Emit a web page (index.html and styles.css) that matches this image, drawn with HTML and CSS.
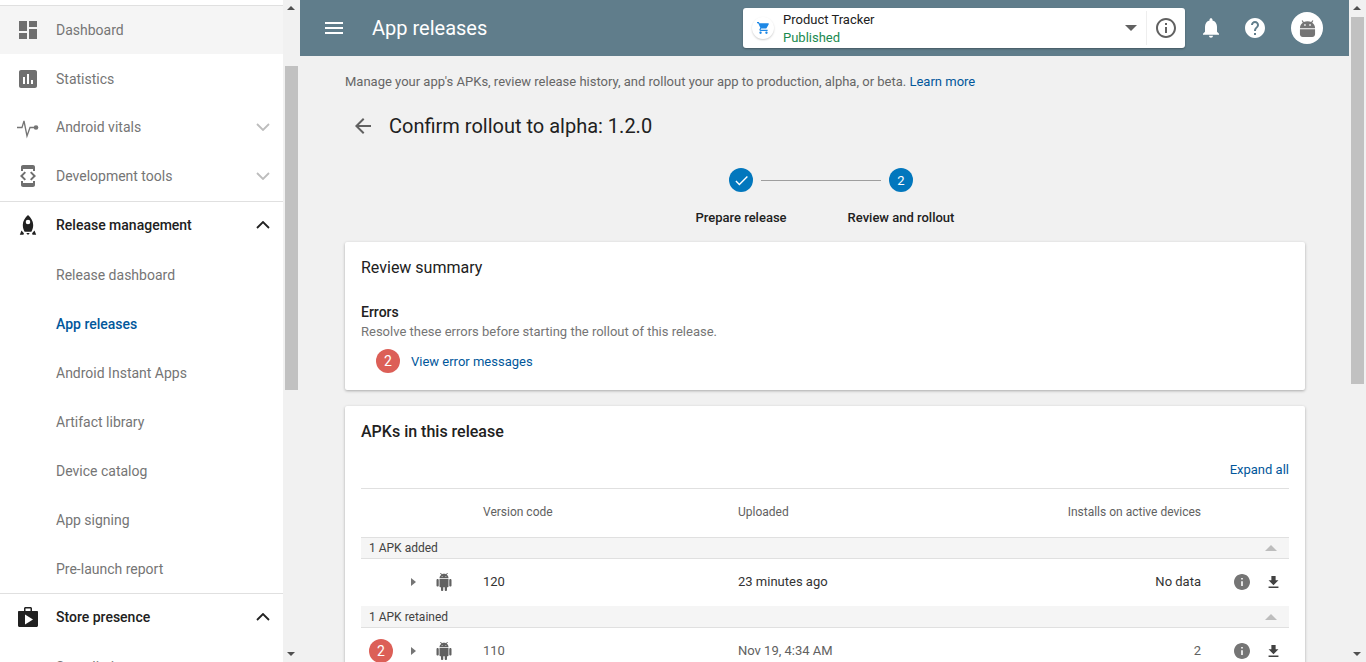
FILE: index.html
```html
<!DOCTYPE html>
<html lang="en">
<head>
<meta charset="utf-8">
<title>App releases</title>
<link rel="stylesheet" href="styles.css">
</head>
<body>
<svg class="sprite" xmlns="http://www.w3.org/2000/svg">
  <symbol id="dashboard" viewBox="3 3 18 18"><path d="M3 13h8V3H3v10zm0 8h8v-6H3v6zm10 0h8V11h-8v10zm0-18v6h8V3h-8z"/></symbol>
  <symbol id="stats" viewBox="3 3 18 18"><path d="M19 3H5c-1.1 0-2 .9-2 2v14c0 1.1.9 2 2 2h14c1.1 0 2-.9 2-2V5c0-1.1-.9-2-2-2zM9 17H7v-7h2v7zm4 0h-2V7h2v10zm4 0h-2v-4h2v4z"/></symbol>
  <symbol id="devtools" viewBox="0 0 24 24"><path d="M7 5h10v2h2V3c0-1.1-.9-1.99-2-1.99L7 1c-1.1 0-2 .9-2 2v4h2V5zm8.41 11.59L20 12l-4.59-4.59L14 8.83 17.17 12 14 15.17l1.41 1.42zM10 15.17L6.83 12 10 8.83 8.59 7.41 4 12l4.59 4.59L10 15.17zM17 19H7v-2H5v4c0 1.1.9 2 2 2h10c1.1 0 2-.9 2-2v-4h-2v2z"/></symbol>
  <symbol id="vitals" viewBox="0 0 24 24"><path class="pulse" d="M1 12.500h5L8 6l3 15 3-8.500h5"/><circle cx="20" cy="12.500" r="2.300"/></symbol>
  <symbol id="rocket" viewBox="0 0 24 24"><path d="M12 2C9.200 4.600 6.800 8 6.800 12c0 2.600.8 5 1.800 6.800h6.800c1-1.800 1.800-4.200 1.800-6.800C17.200 8 14.800 4.600 12 2zm0 9.300a2.300 2.300 0 1 1 0-4.600 2.300 2.300 0 0 1 0 4.600zM5.500 17.500 3.800 21.800h3.700l.4-1.500zm13 0-2.400 2.800.4 1.500h3.700zM10.200 20h3.600L12 22z" fill-rule="evenodd"/></symbol>
  <symbol id="bag" viewBox="0 0 20 20"><path d="M7.500 0h5C13.300 0 14 .7 14 1.500V4h5c.6 0 1 .4 1 1v13.500c0 .8-.7 1.500-1.500 1.500h-17C.7 20 0 19.300 0 18.500V5c0-.6.4-1 1-1h5V1.500C6 .7 6.700 0 7.500 0zm0 1.500V4h5V1.500zM7 7.500v10l8-5z" fill-rule="evenodd"/></symbol>
  <symbol id="avatar" viewBox="0 0 18 20"><path d="M1 10.800h16V16c0 1.700-1.300 3-3 3H4c-1.700 0-3-1.300-3-3zM1 9.800C1 7 2.200 5 4 3.800L2.800 1.800l1-.6L5.100 3.200C6.200 2.700 7.500 2.400 9 2.400s2.800.3 3.900.8l1.300-2 1 .6L14 3.800C15.800 5 17 7 17 9.800zM5.500 5.600v1.600h1.600V5.600zm5.400 0v1.600h1.600V5.600z" fill-rule="evenodd"/></symbol>
  <symbol id="android" viewBox="2 0 20 24"><path d="M6 18c0 .55.45 1 1 1h1v3.500c0 .83.67 1.500 1.500 1.500s1.500-.67 1.500-1.500V19h2v3.500c0 .83.67 1.500 1.500 1.500s1.500-.67 1.500-1.500V19h1c.55 0 1-.45 1-1V8H6v10zM3.500 8C2.670 8 2 8.670 2 9.500v7c0 .83.67 1.500 1.500 1.500S5 17.330 5 16.500v-7C5 8.670 4.330 8 3.500 8zm17 0c-.83 0-1.500.67-1.500 1.500v7c0 .83.67 1.500 1.500 1.500s1.500-.67 1.500-1.500v-7c0-.83-.67-1.500-1.500-1.500zm-4.970-5.840l1.300-1.300c.2-.2.2-.51 0-.71-.2-.2-.51-.2-.71 0l-1.480 1.480C13.850 1.230 12.950 1 12 1c-.96 0-1.860.23-2.660.63L7.850.15c-.2-.2-.51-.2-.71 0-.2.2-.2.51 0 .71l1.310 1.310C6.970 3.260 6 5.010 6 7h12c0-1.990-.97-3.750-2.470-4.840zM10 5H9V4h1v1zm5 0h-1V4h1v1z"/></symbol>
  <symbol id="info" viewBox="2 2 20 20"><path d="M12 2C6.480 2 2 6.480 2 12s4.480 10 10 10 10-4.480 10-10S17.520 2 12 2zm1 15h-2v-6h2v6zm0-8h-2V7h2v2z"/></symbol>
  <symbol id="infoline" viewBox="2 2 20 20"><path d="M11 17h2v-6h-2v6zm1-15C6.480 2 2 6.480 2 12s4.480 10 10 10 10-4.480 10-10S17.520 2 12 2zm0 18c-4.410 0-8-3.590-8-8s3.590-8 8-8 8 3.590 8 8-3.590 8-8 8zM11 9h2V7h-2v2z"/></symbol>
  <symbol id="download" viewBox="5 3 14 17"><path d="M19 9h-4V3H9v6H5l7 7 7-7zM5 18v2h14v-2H5z"/></symbol>
  <symbol id="bell" viewBox="4 2.500 16 19.500"><path d="M12 22c1.100 0 2-.9 2-2h-4c0 1.100.89 2 2 2zm6-6v-5c0-3.070-1.640-5.640-4.500-6.320V4c0-.83-.67-1.500-1.500-1.500s-1.500.67-1.500 1.500v.68C7.630 5.360 6 7.920 6 11v5l-2 2v1h16v-1l-2-2z"/></symbol>
  <symbol id="help" viewBox="2 2 20 20"><path d="M12 2C6.480 2 2 6.480 2 12s4.480 10 10 10 10-4.480 10-10S17.520 2 12 2zm1 17h-2v-2h2v2zm2.070-7.750l-.9.92C13.450 12.900 13 13.500 13 15h-2v-.5c0-1.100.45-2.100 1.170-2.830l1.240-1.260c.37-.36.59-.86.59-1.410 0-1.100-.9-2-2-2s-2 .9-2 2H8c0-2.210 1.790-4 4-4s4 1.790 4 4c0 .88-.36 1.680-.93 2.250z"/></symbol>
  <symbol id="menu" viewBox="3 6 18 12"><path d="M3 18h18v-2H3v2zm0-5h18v-2H3v2zm0-7v2h18V6H3z"/></symbol>
  <symbol id="cart" viewBox="1 2 22 20"><path d="M7 18c-1.100 0-1.990.9-1.990 2S5.900 22 7 22s2-.9 2-2-.9-2-2-2zM1 2v2h2l3.600 7.590-1.350 2.450c-.16.28-.25.61-.25.96 0 1.100.9 2 2 2h12v-2H7.420c-.14 0-.25-.11-.25-.25l.03-.12.9-1.630h7.450c.75 0 1.410-.41 1.750-1.030l3.580-6.490c.08-.14.12-.31.12-.48 0-.55-.45-1-1-1H5.210l-.94-2H1zm16 16c-1.100 0-1.990.9-1.990 2s.89 2 1.990 2 2-.9 2-2-.9-2-2-2z"/></symbol>
  <symbol id="back" viewBox="4 4 16 16"><path d="M20 11H7.830l5.590-5.590L12 4l-8 8 8 8 1.410-1.410L7.830 13H20v-2z"/></symbol>
  <symbol id="check" viewBox="0 0 24 24"><path d="M9 16.170L4.830 12l-1.420 1.410L9 19 21 7l-1.410-1.410z"/></symbol>
  <symbol id="chev" viewBox="0 0 14 8"><path class="chevline" d="M1 1l6 6 6-6"/></symbol>
  <symbol id="chevup" viewBox="0 0 14 8"><path class="chevline" d="M1 7l6-6 6 6"/></symbol>
</svg>

<aside class="side">
  <nav class="nav">
    <a class="row row-first"><svg class="ico"><use href="#dashboard"/></svg><span>Dashboard</span></a>
    <a class="row"><svg class="ico"><use href="#stats"/></svg><span>Statistics</span></a>
    <a class="row row-up"><svg class="ico ico-wide"><use href="#vitals"/></svg><span>Android vitals</span><svg class="chev"><use href="#chev"/></svg></a>
    <a class="row row-up"><svg class="ico ico-tall"><use href="#devtools"/></svg><span>Development tools</span><svg class="chev"><use href="#chev"/></svg></a>
    <a class="row row-head"><svg class="ico ico-tall"><use href="#rocket"/></svg><span>Release management</span><svg class="chev chev-on"><use href="#chevup"/></svg></a>
    <a class="row row-sub">Release dashboard</a>
    <a class="row row-sub row-active">App releases</a>
    <a class="row row-sub">Android Instant Apps</a>
    <a class="row row-sub">Artifact library</a>
    <a class="row row-sub">Device catalog</a>
    <a class="row row-sub">App signing</a>
    <a class="row row-sub">Pre-launch report</a>
    <a class="row row-head"><svg class="ico ico-bag"><use href="#bag"/></svg><span>Store presence</span><svg class="chev chev-on"><use href="#chevup"/></svg></a>
    <a class="row row-sub">Store listing</a>
  </nav>
  <div class="bar">
    <div class="arrow arrow-up"></div>
    <div class="track track-side"><div class="thumb"></div></div>
    <div class="arrow arrow-down"></div>
  </div>
</aside>

<div class="main">
  <header class="top">
    <svg class="burger"><use href="#menu"/></svg>
    <h1 class="top-title">App releases</h1>
    <div class="picker">
      <div class="app-logo"><svg class="cart"><use href="#cart"/></svg></div>
      <div class="app-text">
        <div class="app-name">Product Tracker</div>
        <div class="app-state">Published</div>
      </div>
      <div class="drop"></div>
      <div class="app-info"><svg class="info-line"><use href="#infoline"/></svg></div>
    </div>
    <svg class="top-ico bell"><use href="#bell"/></svg>
    <svg class="top-ico help"><use href="#help"/></svg>
    <div class="avatar"><svg class="avatar-ico"><use href="#avatar"/></svg></div>
  </header>

  <main class="content">
    <p class="intro">Manage your app's APKs, review release history, and rollout your app to production, alpha, or beta. <a class="link">Learn more</a></p>
    <div class="page-head">
      <svg class="back"><use href="#back"/></svg>
      <h2 class="page-title">Confirm rollout to alpha: 1.2.0</h2>
    </div>

    <div class="stepper">
      <div class="step">
        <div class="dot"><svg class="tick"><use href="#check"/></svg></div>
        <div class="step-label">Prepare release</div>
      </div>
      <div class="step-line"></div>
      <div class="step">
        <div class="dot">2</div>
        <div class="step-label">Review and rollout</div>
      </div>
    </div>

    <section class="card card-summary">
      <h3 class="card-title">Review summary</h3>
      <h4 class="err-title">Errors</h4>
      <p class="err-text">Resolve these errors before starting the rollout of this release.</p>
      <div class="err-row"><span class="badge">2</span><a class="link">View error messages</a></div>
    </section>

    <section class="card card-apks">
      <h3 class="card-title">APKs in this release</h3>
      <div class="expand"><a class="link">Expand all</a></div>
      <div class="grid grid-head">
        <span></span><span>Version code</span><span>Uploaded</span><span class="right">Installs on active devices</span><span></span>
      </div>
      <div class="group"><span>1 APK added</span><i class="tri"></i></div>
      <div class="grid grid-row">
        <span class="lead"><i class="caret"></i><svg class="droid"><use href="#android"/></svg></span>
        <span class="strong">120</span><span class="strong">23 minutes ago</span><span class="right strong">No data</span>
        <span class="acts"><svg class="act-info"><use href="#info"/></svg><svg class="act-dl"><use href="#download"/></svg></span>
      </div>
      <div class="group group-tight"><span>1 APK retained</span><i class="tri"></i></div>
      <div class="grid grid-row">
        <span class="lead"><span class="badge badge-row">2</span><i class="caret"></i><svg class="droid"><use href="#android"/></svg></span>
        <span>110</span><span>Nov 19, 4:34 AM</span><span class="right">2</span>
        <span class="acts"><svg class="act-info"><use href="#info"/></svg><svg class="act-dl"><use href="#download"/></svg></span>
      </div>
    </section>
  </main>
</div>

<div class="bar bar-main">
  <div class="arrow arrow-up"></div>
  <div class="track track-main"><div class="thumb"></div></div>
  <div class="arrow arrow-down"></div>
</div>
</body>
</html>
```

FILE: styles.css
```css
* { box-sizing: border-box; }
html, body { height: 100%; }
body {
  margin: 0;
  display: flex;
  height: 662px;
  overflow: hidden;
  font-family: Roboto, "Liberation Sans", sans-serif;
  font-size: 13px;
  color: #212121;
  background: #f1f1f1;
}
h1, h2, h3, h4, p { margin: 0; font-weight: 400; }
svg { display: block; fill: currentColor; flex: none; }
.sprite { display: none; }
.pulse { fill: none; stroke: currentColor; stroke-width: 1.3; }
.chevline { fill: none; stroke: currentColor; stroke-width: 1.8; }

/* sidebar */
.side { width: 300px; flex: none; display: flex; height: 662px; }
.nav { width: 283px; flex: none; background: #fff; padding-top: 5px; overflow: hidden; }
.row {
  display: flex; align-items: center; height: 49px; padding-left: 19px;
  font-size: 14px; color: #757575;
}
.row > span { flex: 1; }
.row-up { padding-bottom: 1px; }
.row-first { height: 49px; background: #f5f5f5; border-top: 1px solid #e0e0e0; }
.row-head { height: 49px; padding-bottom: 2px; color: #212121; font-weight: 500; border-top: 1px solid #e0e0e0; }
.row-sub { padding-left: 56px; }
.row-active { color: #01579b; font-weight: 500; }
.ico { width: 18px; height: 18px; margin-right: 19px; color: #6f6f6f; }
.ico-wide { width: 24px; height: 24px; margin: 0 16px 0 -3px; color: #757575; }
.ico-tall { width: 24px; height: 24px; margin: 0 16px 0 -3px; }
.row-head .ico { color: #212121; }
.ico-bag { width: 20px; height: 20px; margin: 0 18px 0 -1px; }
.chev { width: 14px; height: 8px; margin-right: 13px; color: #bdbdbd; }
.chev-on { color: #212121; }

/* scrollbars */
.bar { width: 17px; flex: none; height: 662px; background: #f1f1f1; display: flex; flex-direction: column; align-items: center; }
.arrow { height: 17px; width: 17px; flex: none; position: relative; }
.arrow::after { content: ""; position: absolute; left: 4px; border-left: 4px solid transparent; border-right: 4px solid transparent; }
.arrow-up::after { top: 6px; border-bottom: 4px solid #505050; }
.arrow-down::after { top: 7px; border-top: 4px solid #505050; }
.track { flex: 1; width: 13px; margin: 0 auto; }
.thumb { width: 13px; background: #c1c1c1; }
.track-side { padding-top: 49px; }
.track-side .thumb { height: 324px; }
.track-main .thumb { height: 367px; }

/* main */
.main { flex: 1; min-width: 0; display: flex; flex-direction: column; }
.top { height: 56px; flex: none; background: #607d8b; color: #fff; display: flex; align-items: center; padding-left: 25px; }
.burger { width: 18px; height: 12px; }
.top-title { font-size: 20px; margin-left: 29px; width: 371px; }
.picker { width: 442px; height: 40px; background: #fff; border-radius: 3px; box-shadow: 0 1px 2px rgba(0,0,0,.3); display: flex; align-items: center; color: #212121; }
.app-logo { width: 22px; height: 22px; border-radius: 50%; margin-left: 9px; box-shadow: 0 1px 2px rgba(0,0,0,.2); display: flex; align-items: center; justify-content: center; }
.cart { width: 13px; height: 12px; color: #1e88e5; }
.app-text { margin-left: 9px; flex: 1; line-height: 18px; font-size: 13px; padding-top: 2px; }
.app-state { color: #1b8a50; }
.drop { border-left: 6px solid transparent; border-right: 6px solid transparent; border-top: 6px solid #616161; margin-right: 9px; }
.app-info { border-left: 1px solid #eee; height: 34px; width: 39px; display: flex; align-items: center; padding-left: 9px; }
.info-line { width: 20px; height: 20px; color: #616161; }
.top-ico { height: 20px; width: 20px; }
.bell { width: 16px; margin-left: 18px; }
.help { margin-left: 26px; }
.avatar { width: 32px; height: 32px; border-radius: 50%; background: #fff; margin-left: 26px; display: flex; align-items: center; justify-content: center; }
.avatar-ico { width: 17px; height: 19px; color: #757575; }

/* content */
.content { flex: 1; min-height: 0; overflow: hidden; padding: 0 44px 0 45px; }
.intro { font-size: 13px; line-height: 16px; margin-top: 18px; color: #666; }
.link { color: #01579b; }
.page-head { display: flex; align-items: center; margin-top: 24px; height: 24px; padding-left: 10px; }
.back { width: 16px; height: 16px; color: #616161; }
.page-title { font-size: 20px; margin-left: 18px; color: #212121; }
.stepper { display: flex; justify-content: center; margin-top: 30px; height: 74px; padding-right: 8px; }
.step { width: 24px; display: flex; flex-direction: column; align-items: center; }
.dot { width: 24px; height: 24px; border-radius: 50%; background: #0277bd; color: #fff; display: flex; align-items: center; justify-content: center; font-size: 13px; font-weight: 400; flex: none; }
.tick { width: 17px; height: 17px; }
.step-label { margin-top: 18px; line-height: 16px; white-space: nowrap; font-weight: 500; font-size: 13px; color: #212121; }
.step-line { width: 120px; height: 1px; background: #9e9e9e; margin: 12px 8px 0; }
.card { background: #fff; border-radius: 2px; box-shadow: 0 1px 3px rgba(0,0,0,.3); padding: 0 16px; }
.card-summary { height: 148px; padding-top: 16px; }
.card-title { font-size: 16px; line-height: 20px; font-weight: 500; color: #212121; }
.card-summary .card-title { font-weight: 400; }
.err-title { font-size: 14px; line-height: 18px; font-weight: 500; margin-top: 25px; }
.err-text { line-height: 16px; margin-top: 3px; color: #757575; }
.err-row { display: flex; align-items: center; margin-top: 9px; padding-left: 15px; }
.badge { width: 24px; height: 24px; border-radius: 50%; background: #dc5f57; color: #fff; display: flex; align-items: center; justify-content: center; font-size: 14px; margin-right: 11px; flex: none; }
.card-apks { margin-top: 16px; padding-top: 16px; height: 400px; }
.expand { text-align: right; line-height: 16px; margin-top: 20px; padding-bottom: 10px; border-bottom: 1px solid #e0e0e0; }
.grid { display: grid; grid-template-columns: 122px 255px 200px 1fr 88px; align-items: center; font-size: 13px; color: #616161; }
.grid-head { height: 48px; font-size: 12px; padding-bottom: 2px; }
.grid-row { height: 47px; padding-bottom: 2px; }
.right { text-align: right; }
.strong { color: #333; }
.group { height: 22px; background: #f5f5f5; border-top: 1px solid #e0e0e0; border-bottom: 1px solid #e0e0e0; display: flex; align-items: center; justify-content: space-between; padding: 0 12px 0 8px; font-size: 12px; color: #424242; }
.group-tight { border-top: 0; height: 22px; }
.tri { border-left: 6px solid transparent; border-right: 6px solid transparent; border-bottom: 6px solid #bdbdbd; }
.lead { display: flex; align-items: center; height: 24px; padding-left: 50px; position: relative; }
.caret { border-top: 4.500px solid transparent; border-bottom: 4.500px solid transparent; border-left: 5px solid #757575; margin-right: 20px; }
.badge-row { position: absolute; left: 8px; top: 0; margin: 0; }
.droid { width: 16px; height: 18px; color: #616161; }
.acts { display: flex; align-items: center; padding-left: 33px; }
.act-info { width: 16px; height: 16px; color: #757575; }
.act-dl { width: 11px; height: 12px; margin-left: 18px; color: #424242; }
```
